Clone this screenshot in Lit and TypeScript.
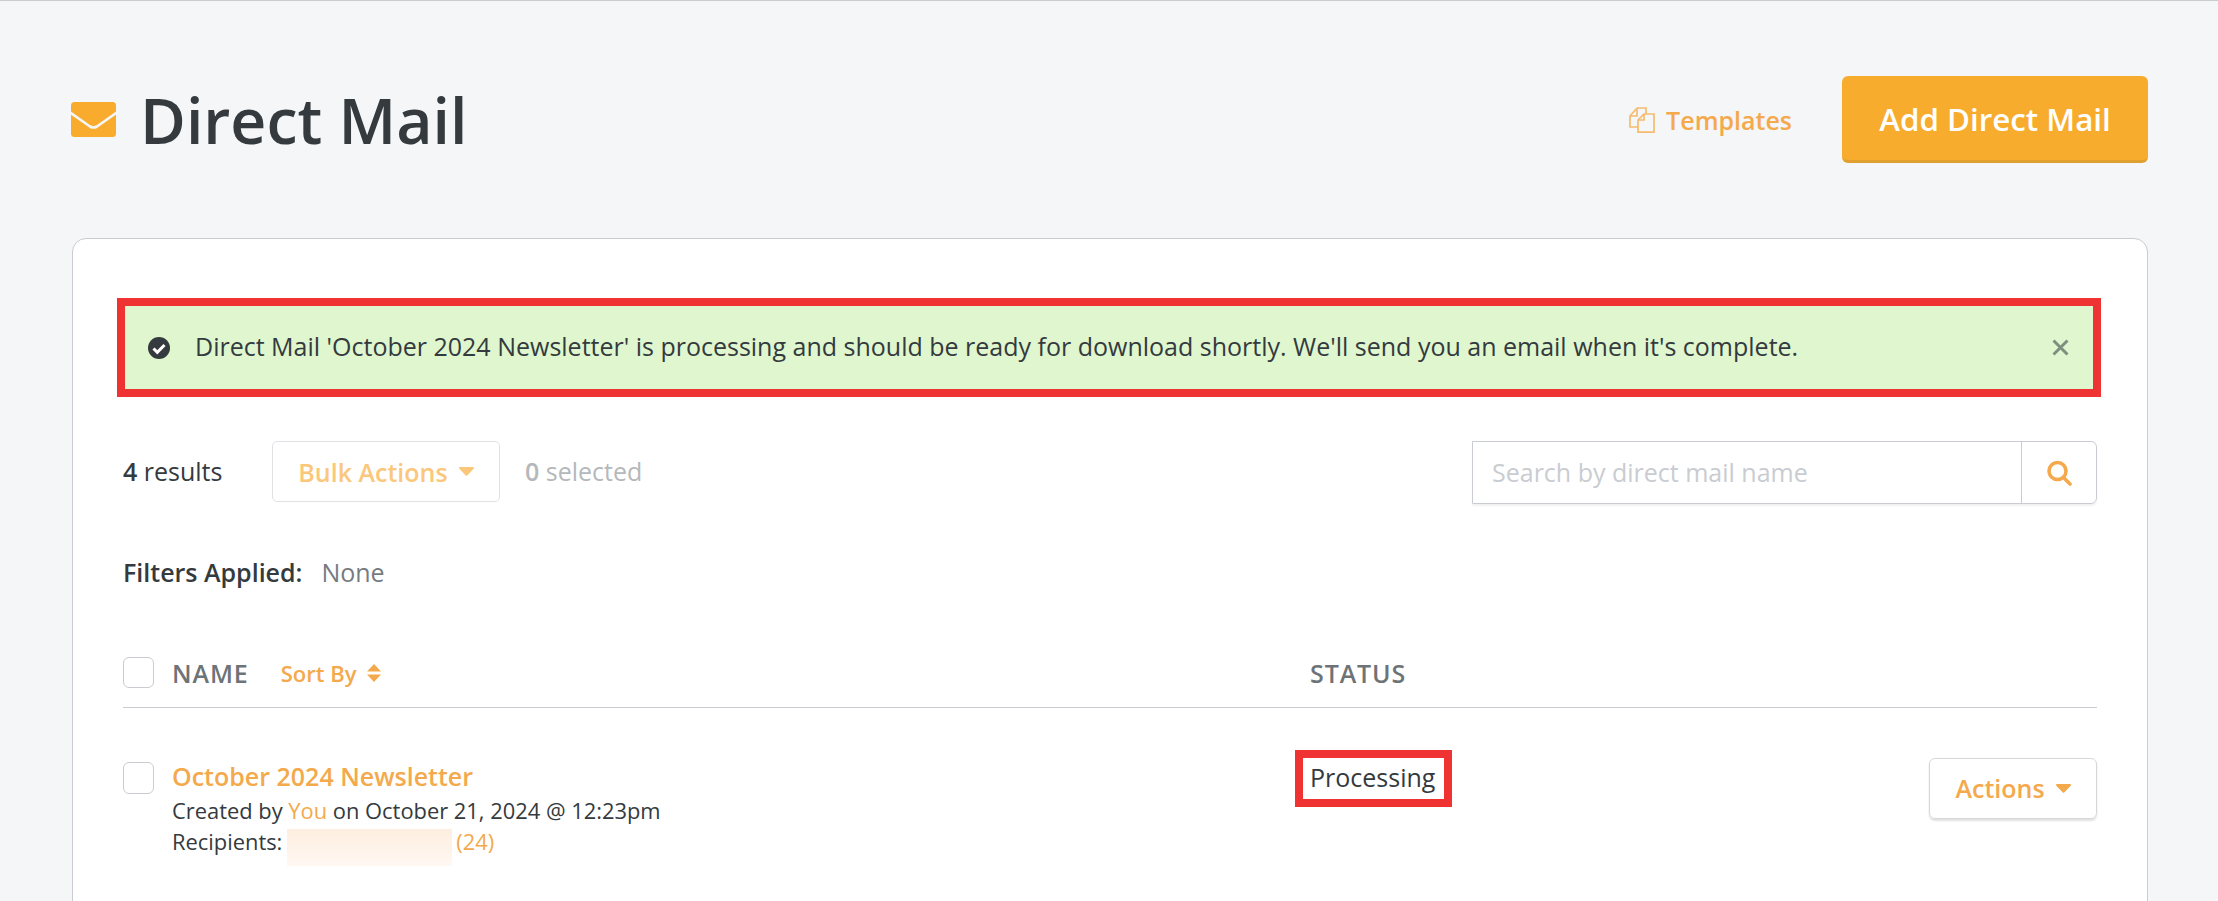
import { LitElement, html, css } from "lit";
import { customElement } from "lit/decorators.js";

@customElement("app-root")
export class AppRoot extends LitElement {
  static styles = css`
    :host { display: block; height: 901px; overflow: hidden; background: #f4f6f8; border-top: 1px solid #c9ccd1; box-sizing: border-box; font-family: "Open Sans", sans-serif; color: #343a3d; font-size: 25px; }
    .page { padding: 75px 70px 0 72px; }
    .head { display: flex; align-items: center; height: 87px; margin-bottom: 75px; }
    .env { width: 45px; height: 35px; margin-left: -1px; margin-right: 24px; flex: none; }
    h1 { margin: 0; font-size: 62.6px; font-weight: 600; color: #343a3d; line-height: 87px; flex: 1; }
    .tpl { display: flex; align-items: center; gap: 11px; color: #f3a94c; font-size: 25px; font-weight: 600; margin-right: 50px; }
    .tpl svg { width: 26px; height: 26px; }
    .add { width: 306px; height: 87px; box-sizing: border-box; background: #f8ac2e; border-bottom: 3px solid #e0a02f; border-radius: 6px; color: #fff; font-size: 31.3px; font-weight: 600; display: flex; align-items: center; justify-content: center; padding-top: 1px; }
    .card { background: #fff; border: 1px solid #c9ccd1; border-radius: 14px 14px 0 0; padding: 67px 50px 0; height: 700px; box-sizing: border-box; }
    .alert { margin: 0 4px 0 2px; height: 83px; background: #dff6cf; outline: 8px solid #ef3333; display: flex; align-items: center; padding: 0 24px 0 23px; }
    .alert .ok { width: 22px; height: 22px; margin-right: 25px; flex: none; }
    .alert .msg { flex: 1; padding-bottom: 4px; white-space: nowrap; }
    .alert .x { width: 17px; height: 17px; flex: none; }
    .tools { display: flex; align-items: flex-start; margin-top: 52px; height: 63px; }
    .count { width: 149px; line-height: 61px; }
    .count b, .sel b { font-weight: 600; }
    .bulk { width: 228px; height: 61px; box-sizing: border-box; border: 1px solid #e0e2e5; border-radius: 5px; display: flex; align-items: center; justify-content: center; gap: 11px; color: #fbc77a; font-weight: 600; margin-right: 25px; }
    .sel { color: #b5b8bb; flex: 1; line-height: 61px; }
    .search { width: 625px; height: 63px; box-sizing: border-box; border: 1px solid #c9ccd1; border-radius: 0 6px 6px 0; display: flex; box-shadow: 0 2px 2px rgba(0,0,0,.06); }
    .ph { flex: 1; color: #c9ccd1; padding: 0 0 2px 19px; display: flex; align-items: center; }
    .sbtn { width: 74px; border-left: 1px solid #c9ccd1; display: flex; align-items: center; justify-content: center; }
    .sbtn svg { width: 26px; height: 26px; }
    .filters { margin-top: 52px; display: flex; gap: 19px; height: 32px; align-items: center; color: #767b7f; }
    .filters b { font-weight: 600; color: #343a3d; }
    .th { display: flex; align-items: center; margin-top: 57px; height: 55px; padding-bottom: 7px; border-bottom: 1px solid #c9ccd1; }
    .cb { width: 31px; height: 31px; box-sizing: border-box; border: 1px solid #c9ccd1; border-radius: 6px; margin-right: 18px; flex: none; }
    .label { color: #6d7377; font-weight: 600; letter-spacing: 0.9px; }
    .namecol { width: 1138px; flex: none; display: flex; align-items: center; }
    .sort { display: flex; align-items: center; gap: 11px; margin-left: 32px; color: #f3a94c; font-size: 22px; font-weight: 600; }
    .sort svg { width: 14px; height: 18px; }
    .tr { display: flex; margin-top: 54px; }
    .tr .cb { height: 32px; }
    .main { width: 1138px; flex: none; font-size: 21.88px; line-height: 31px; }
    .name { font-size: 25px; font-weight: 600; color: #f3a94c; line-height: 37px; margin-top: -4px; }
    .o { color: #f3a94c; }
    .blur { display: inline-block; width: 165px; height: 37px; margin: 12px 4px 0 5px; background: linear-gradient(#fdeee0, #fff8f2); }
    .rec { display: flex; align-items: center; height: 31px; }
    .status { outline: 8px solid #ef3333; height: 41px; width: 141px; margin-top: -4px; margin-left: -7px; padding: 0 0 4px 7px; box-sizing: border-box; display: flex; align-items: center; }
    .act { margin-left: auto; width: 168px; height: 61px; margin-top: -4px; padding-bottom: 1px; box-sizing: border-box; border: 1px solid #d5d7da; border-radius: 6px; box-shadow: 0 2px 2px rgba(0,0,0,.12); display: flex; align-items: center; justify-content: center; gap: 11px; color: #f3a94c; font-weight: 600; }
    .caret { width: 15px; height: 9px; }
  `;

  render() {
    const caret = (c: string) => html`<svg class="caret" viewBox="0 0 15 9"><path d="M1 0h13a1 1 0 0 1 .7 1.7L8.2 8.4a1 1 0 0 1-1.4 0L.3 1.7A1 1 0 0 1 1 0z" fill=${c}/></svg>`;
    return html`<div class="page">
      <div class="head">
        <svg class="env" viewBox="0 0 45 35"><rect width="45" height="35" rx="3.5" fill="#f9ab2d"/><path d="M-1 10.5 19 24.5Q22.5 26.5 26 24.5L46 10.5" fill="none" stroke="#f4f6f8" stroke-width="2.6"/></svg>
        <h1>Direct Mail</h1>
        <div class="tpl"><svg viewBox="0 0 26 26" fill="none" stroke="#f6bb6e" stroke-width="1.7"><path d="M8 1H17V7M8 1 1 9V20H9"/><path d="M1 9H8V1"/><path d="M9 13 15 7H25V25.2H9Z"/><path d="M9 13H15V7"/></svg>Templates</div>
        <div class="add">Add Direct Mail</div>
      </div>
      <div class="card">
        <div class="alert">
          <svg class="ok" viewBox="0 0 22 22"><circle cx="11" cy="11" r="11" fill="#343a3d"/><path d="M5.5 11.5 9.3 15.3 16.5 8" fill="none" stroke="#fff" stroke-width="3"/></svg>
          <div class="msg">Direct Mail 'October 2024 Newsletter' is processing and should be ready for download shortly. We'll send you an email when it's complete.</div>
          <svg class="x" viewBox="0 0 17 17"><path d="M1.5 1.5 15.5 15.5M15.5 1.5 1.5 15.5" stroke="#7d9080" stroke-width="3"/></svg>
        </div>
        <div class="tools">
          <div class="count"><b>4</b> results</div>
          <div class="bulk">Bulk Actions ${caret("#fbc77a")}</div>
          <div class="sel"><b>0</b> selected</div>
          <div class="search"><div class="ph">Search by direct mail name</div><div class="sbtn"><svg viewBox="0 0 26 26" fill="none" stroke="#f3a94c" stroke-width="3.6"><circle cx="11.5" cy="11" r="8.5"/><path d="M17.5 17.5 24 24" stroke-linecap="round"/></svg></div></div>
        </div>
        <div class="filters"><b>Filters Applied:</b><span>None</span></div>
        <div class="th">
          <div class="cb"></div>
          <div class="namecol">
            <div class="label">NAME</div>
            <div class="sort">Sort By<svg viewBox="0 0 14 18"><path d="M7 0l7 7.5H0zM7 18l-7-7.5h14z" fill="#f3a94c"/></svg></div>
          </div>
          <div class="label">STATUS</div>
        </div>
        <div class="tr">
          <div class="cb"></div>
          <div class="main">
            <div class="name">October 2024 Newsletter</div>
            <div>Created by <span class="o">You</span> on October 21, 2024 @ 12:23pm</div>
            <div class="rec">Recipients:<span class="blur"></span><span class="o">(24)</span></div>
          </div>
          <div class="status">Processing</div>
          <div class="act">Actions ${caret("#f3a94c")}</div>
        </div>
      </div>
    </div>`;
  }
}
